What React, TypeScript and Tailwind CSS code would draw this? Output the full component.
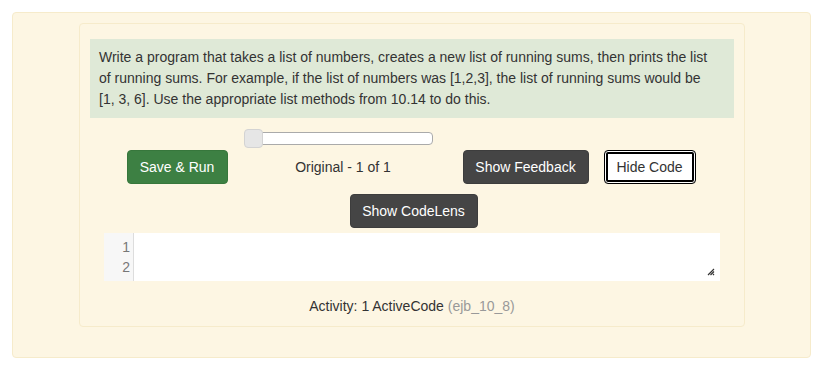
function App() {
  return (
    <div className="w-[814px] h-[368px] bg-white pt-[12px] pl-[12px] font-['Liberation_Sans',Arial,sans-serif] text-[14px] text-[#333]">
      <div className="w-[799px] h-[346px] bg-[#fdf6e3] border border-[#f6ebcb] rounded-[4px] pt-[10px] pl-[66px]">
        <div className="w-[666px] h-[304px] border border-[#f6ebcb] rounded-[4px] pt-[15px] px-[10px]">
          <div className="bg-[#dfe9d7] pl-[9px] pr-[18px] py-[8px] leading-[21px]">
            Write a program that takes a list of numbers, creates a new list of running sums, then prints the list of running sums. For example, if the list of numbers was [1,2,3], the list of running sums would be [1, 3, 6]. Use the appropriate list methods from 10.14 to do this.
          </div>

          <div className="flex justify-center items-start mt-[11px] pr-[2px]">
            <button className="mt-[21px] h-[34px] w-[101px] bg-[#3d8043] border border-[#37773c] text-white rounded-[4px]">
              Save &amp; Run
            </button>
            <div className="ml-[16px] w-[189px] flex flex-col items-center">
              <div className="relative w-[189px] h-[18px]">
                <div className="absolute left-0 right-0 top-[3px] h-[13px] bg-white border border-[#aaa] rounded-[4px]" />
                <div className="absolute left-0 top-0 w-[19px] h-[19px] bg-[#e6e6e6] border border-[#d3d3d3] rounded-[4px]" />
              </div>
              <div className="mt-[10px] leading-[20px] pl-[10px]">Original - 1 of 1</div>
            </div>
            <button className="ml-[30px] mt-[21px] h-[34px] w-[126px] bg-[#454545] border border-[#3d3d3d] text-white rounded-[4px]">
              Show Feedback
            </button>
            <button className="ml-[15px] mt-[21px] h-[34px] w-[92px] bg-white border border-black text-[#333] rounded-[4px] shadow-[inset_0_0_0_1px_white,inset_0_0_0_3px_black]">
              Hide Code
            </button>
          </div>

          <div className="flex justify-center mt-[10px] pl-[3px]">
            <button className="h-[34px] w-[128px] bg-[#454545] border border-[#3d3d3d] text-white rounded-[4px]">
              Show CodeLens
            </button>
          </div>

          <div className="relative mt-[5px] mx-[14px] h-[48px] bg-white flex">
            <div className="w-[30px] bg-[#f7f7f7] border-r border-[#ddd] pt-[4px] pr-[3px] text-right text-[14px] leading-[20px] text-[#777]">
              <div>1</div>
              <div>2</div>
            </div>
            <div className="flex-1" />
            <svg className="absolute right-[5px] bottom-[5px]" width="8" height="8" viewBox="0 0 8 8">
              <path d="M7 1 L1 7 M7 3.5 L3.5 7 M7 6 L6 7" stroke="#333" strokeWidth="1.2" />
            </svg>
          </div>

          <div className="mt-[15px] text-center leading-[20px]">
            Activity: 1 ActiveCode <span className="text-[#999]">(ejb_10_8)</span>
          </div>
        </div>
      </div>
    </div>
  );
}

export default App;
